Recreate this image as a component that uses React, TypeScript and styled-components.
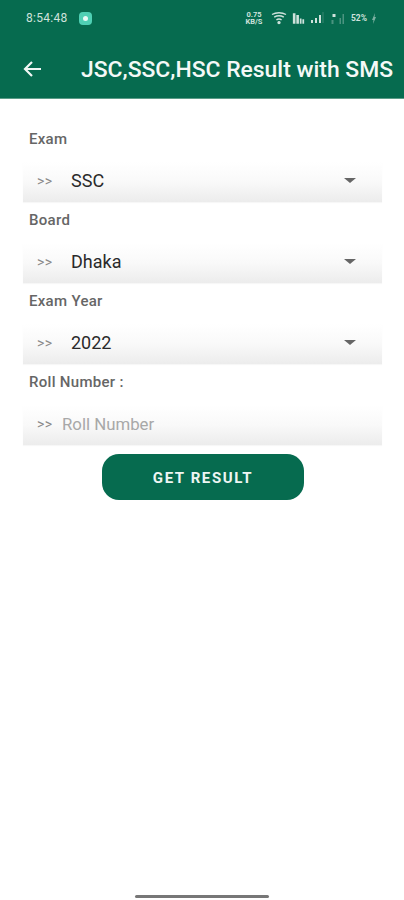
import styled, { createGlobalStyle } from "styled-components";

const GlobalStyle = createGlobalStyle`
  html, body {
    margin: 0;
    padding: 0;
    background: #fff;
  }
  * {
    box-sizing: border-box;
  }
`;

const Screen = styled.div`
  display: flex;
  flex-direction: column;
  width: 404px;
  height: 900px;
  background: #fff;
  font-family: Roboto, "Liberation Sans", sans-serif;
`;

const Header = styled.header`
  flex: none;
  height: 99px;
  background: #066b4f;
  border-bottom: 1px solid #5a9c88;
`;

const StatusBar = styled.div`
  display: flex;
  align-items: center;
  height: 36px;
  padding: 0 28px 0 26px;
  color: #cfe2dc;
  font-size: 12px;
`;

const Clock = styled.span`
  letter-spacing: 0.3px;
`;

const AppDot = styled.span`
  display: flex;
  align-items: center;
  justify-content: center;
  width: 13px;
  height: 13px;
  margin-left: 11px;
  border-radius: 4px;
  background: #4fd0b4;

  &::after {
    content: "";
    width: 5px;
    height: 5px;
    border-radius: 50%;
    background: #e8fbf6;
  }
`;

const StatusIcons = styled.div`
  display: flex;
  align-items: center;
  gap: 5px;
  margin-left: auto;
`;

const Speed = styled.span`
  width: 18px;
  margin-right: 3px;
  font-size: 7.5px;
  line-height: 7px;
  font-weight: 700;
  text-align: center;
`;

const Battery = styled.span`
  font-size: 8.5px;
  font-weight: 700;
`;

const Toolbar = styled.div`
  display: flex;
  align-items: center;
  height: 62px;
  padding: 4px 8px 0 23px;
`;

const BackButton = styled.button`
  display: flex;
  width: 18px;
  height: 18px;
  padding: 0;
  border: 0;
  background: none;
  color: #f1f7f5;
`;

const Title = styled.h1`
  margin: 0 0 0 40px;
  color: #f4f9f7;
  font-size: 22.9px;
  font-weight: 500;
  white-space: nowrap;
`;

const Form = styled.form`
  display: flex;
  flex-direction: column;
  padding: 28px 22px 0 23px;
`;

const Label = styled.label`
  height: 35px;
  padding: 3px 0 0 6px;
  color: #666;
  font-size: 15px;
  font-weight: 500;
  line-height: 18px;
  letter-spacing: 0.3px;
`;

const Field = styled.div`
  display: flex;
  align-items: center;
  height: 40px;
  margin-bottom: 6px;
  padding: 0 26px 3px 14px;
  background: linear-gradient(#ffffff 0%, #f9f9f9 50%, #ececec 100%);
  box-shadow: 0 1px 1px rgba(0, 0, 0, 0.03);
`;

const Chevrons = styled.span`
  flex: none;
  width: 34px;
  color: #8a8a8a;
  font-size: 14px;
  letter-spacing: 0.4px;
`;

const Value = styled.span`
  color: #2a2a2a;
  font-size: 18px;
`;

const Caret = styled.span`
  margin-left: auto;
  border-top: 5px solid #666;
  border-left: 6px solid transparent;
  border-right: 6px solid transparent;
`;

const RollInput = styled.input`
  flex: 1;
  min-width: 0;
  margin-left: -9px;
  padding: 0;
  border: 0;
  outline: 0;
  background: none;
  color: #2a2a2a;
  font-family: inherit;
  font-size: 16.8px;

  &::placeholder {
    color: #a8a8a8;
    opacity: 1;
  }
`;

const SubmitButton = styled.button`
  align-self: center;
  width: 202px;
  height: 46px;
  margin: 3px 0 0 1px;
  padding: 2px 0 0;
  border: 0;
  border-radius: 17px;
  background: #066b4f;
  color: #eef6f3;
  font-family: inherit;
  font-size: 15px;
  font-weight: 700;
  letter-spacing: 1.6px;
`;

const Spacer = styled.div`
  flex: 1;
`;

const HomeBar = styled.div`
  flex: none;
  align-self: center;
  width: 134px;
  height: 3px;
  margin-bottom: 2px;
  border-radius: 2px;
  background: #777;
`;

const selects = [
  { label: "Exam", value: "SSC" },
  { label: "Board", value: "Dhaka" },
  { label: "Exam Year", value: "2022" },
];

export default function App() {
  return (
    <Screen>
      <GlobalStyle />
      <Header>
        <StatusBar>
          <Clock>8:54:48</Clock>
          <AppDot />
          <StatusIcons>
            <Speed>0.75 KB/S</Speed>
            <svg width="16" height="13" viewBox="0 0 16 13" fill="none" stroke="currentColor" strokeWidth="1.4">
              <path d="M1 2.5c4-2.4 10-2.4 14 0M3.2 5.2c2.8-1.6 6.8-1.6 9.600 0M5.400 7.800c1.600-.9 3.600-.9 5.200 0" />
              <circle cx="8" cy="10.600" r="1" fill="currentColor" />
            </svg>
            <svg width="13" height="13" viewBox="0 0 15 14" fill="currentColor">
              <path d="M1 1h3v12H1zM5 3h3v10H5zM9 7h2v6H9zM12 8h2v5h-2z" />
            </svg>
            <svg width="14" height="12" viewBox="0 0 14 12" fill="currentColor">
              <path d="M1 8h2v3H1zM5 6h2v5H5zM9 3h2v8H9z" />
              <path d="M12.500 0h1v11h-1z" opacity=".25" />
            </svg>
            <svg width="17" height="13" viewBox="0 0 16 13" fill="currentColor">
              <path d="M3 2h3v3H3z" />
              <path d="M2 8h2v4H2zM10 6h1.500v6H10zM13 2h1.500v10H13z" opacity=".35" />
            </svg>
            <Battery>52%</Battery>
            <svg width="4" height="11" viewBox="0 0 4 11" fill="currentColor" opacity=".6">
              <path d="M3 0 0 7h1.500L1 11l3-7H2.500z" />
            </svg>
          </StatusIcons>
        </StatusBar>
        <Toolbar>
          <BackButton type="button" aria-label="Back">
            <svg width="18" height="18" viewBox="0 0 18 18" fill="none" stroke="currentColor" strokeWidth="2.200">
              <path d="M18 9H2M9 2 2 9l7 7" />
            </svg>
          </BackButton>
          <Title>JSC,SSC,HSC Result with SMS</Title>
        </Toolbar>
      </Header>
      <Form>
        {selects.map((item) => (
          <div key={item.label}>
            <Label as="div">{item.label}</Label>
            <Field>
              <Chevrons>&gt;&gt;</Chevrons>
              <Value>{item.value}</Value>
              <Caret />
            </Field>
          </div>
        ))}
        <Label htmlFor="roll">Roll Number :</Label>
        <Field>
          <Chevrons>&gt;&gt;</Chevrons>
          <RollInput id="roll" placeholder="Roll Number" />
        </Field>
        <SubmitButton type="button">GET RESULT</SubmitButton>
      </Form>
      <Spacer />
      <HomeBar />
    </Screen>
  );
}
